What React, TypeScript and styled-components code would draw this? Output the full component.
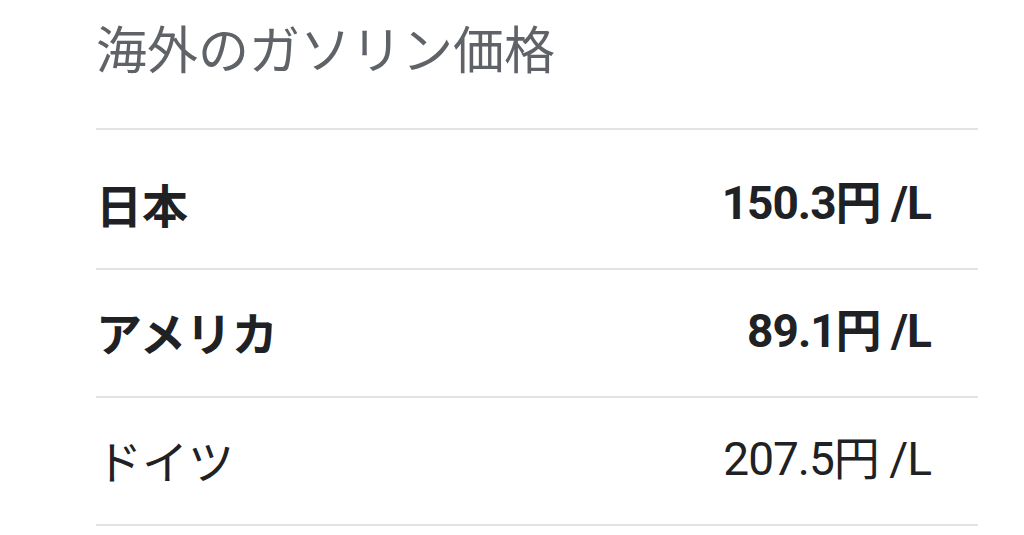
import React from "react";
import styled, { createGlobalStyle } from "styled-components";

const GlobalStyle = createGlobalStyle`
  html, body {
    margin: 0;
    padding: 0;
    background: #ffffff;
  }
  body {
    font-family: "Roboto", "Noto Sans CJK JP", sans-serif;
  }
`;

const Page = styled.div`
  width: 1024px;
  height: 535px;
  overflow: hidden;
  box-sizing: border-box;
  padding: 22px 46px 0 96px;
  background: #ffffff;
`;

const Title = styled.h1`
  margin: 0;
  height: 106px;
  font-family: "Noto Sans CJK JP", sans-serif;
  font-size: 51px;
  line-height: 1;
  font-weight: 400;
  color: #5f6368;
`;

const List = styled.div`
  border-top: 2px solid #e3e3e3;
  padding-top: 12px;
`;

const Row = styled.div`
  display: flex;
  align-items: center;
  justify-content: space-between;
  height: 126px;
  padding-right: 47px;
  border-bottom: 2px solid #e3e3e3;
`;

const Label = styled.span<{ $bold?: boolean }>`
  font-family: "Noto Sans CJK JP", sans-serif;
  font-size: 46px;
  line-height: 1;
  padding-bottom: 4px;
  font-weight: ${(p) => (p.$bold ? 700 : 400)};
  color: #202124;
`;

const Value = styled.span<{ $bold?: boolean }>`
  font-family: "Roboto", "Noto Sans CJK JP", sans-serif;
  font-size: 46px;
  line-height: 1;
  padding-bottom: 4px;
  font-weight: ${(p) => (p.$bold ? 700 : 400)};
  color: #202124;
  letter-spacing: -1px;
`;

const rows = [
  { country: "日本", price: "150.3円 /L", bold: true },
  { country: "アメリカ", price: "89.1円 /L", bold: true },
  { country: "ドイツ", price: "207.5円 /L", bold: false },
];

export default function App() {
  return (
    <>
      <GlobalStyle />
      <Page>
        <Title>海外のガソリン価格</Title>
        <List>
          {rows.map((r) => (
            <Row key={r.country}>
              <Label $bold={r.bold}>{r.country}</Label>
              <Value $bold={r.bold}>{r.price}</Value>
            </Row>
          ))}
        </List>
      </Page>
    </>
  );
}
